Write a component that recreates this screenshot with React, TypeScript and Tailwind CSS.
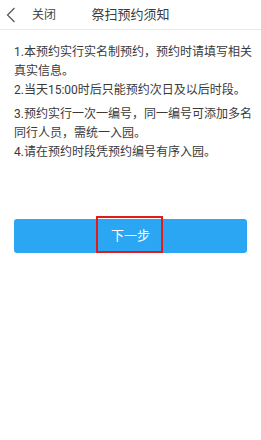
import React from 'react';

const rules = [
  { text: '1.本预约实行实名制预约，预约时请填写相关真实信息。', gap: 'mb-0' },
  { text: '2.当天15:00时后只能预约次日及以后时段。', gap: 'mb-[5px]' },
  { text: '3.预约实行一次一编号，同一编号可添加多名同行人员，需统一入园。', gap: 'mb-0' },
  { text: '4.请在预约时段凭预约编号有序入园。', gap: 'mb-0' },
];

export default function App() {
  return (
    <div
      className="w-[261px] h-[440px] bg-white text-[#3a3a3a]"
      style={{ fontFamily: 'Roboto, "Noto Sans CJK SC", sans-serif' }}
    >
      {/* Header */}
      <div className="relative h-[30px] flex items-center border-b border-[#e8e8e8]">
        <button className="flex items-center h-full pl-[6px] pr-2">
          <svg width="10" height="16" viewBox="0 0 10 16" fill="none">
            <path d="M8.5 1 L1.5 8 L8.5 15" stroke="#555" strokeWidth="1.2" />
          </svg>
          <span className="ml-[16px] text-[12px] leading-none text-[#444]">关闭</span>
        </button>
        <div className="absolute left-0 right-0 text-center text-[13px] leading-none pointer-events-none">
          祭扫预约须知
        </div>
      </div>

      {/* Notice */}
      <div className="pl-[14px] pr-[6px] pt-[13px] text-[12px] leading-[19px]">
        {rules.map((r) => (
          <p key={r.text} className={r.gap}>
            {r.text}
          </p>
        ))}
      </div>

      {/* Next */}
      <div className="px-[14px] mt-[57px]">
        <div className="relative">
          <button className="w-full h-[34px] rounded-[3px] bg-[#2ba6f3] text-white text-[13px]">
            下一步
          </button>
          <div className="absolute left-[82px] top-[-3px] w-[67px] h-[37px] border-2 border-[#e3191c] pointer-events-none" />
        </div>
      </div>
    </div>
  );
}
